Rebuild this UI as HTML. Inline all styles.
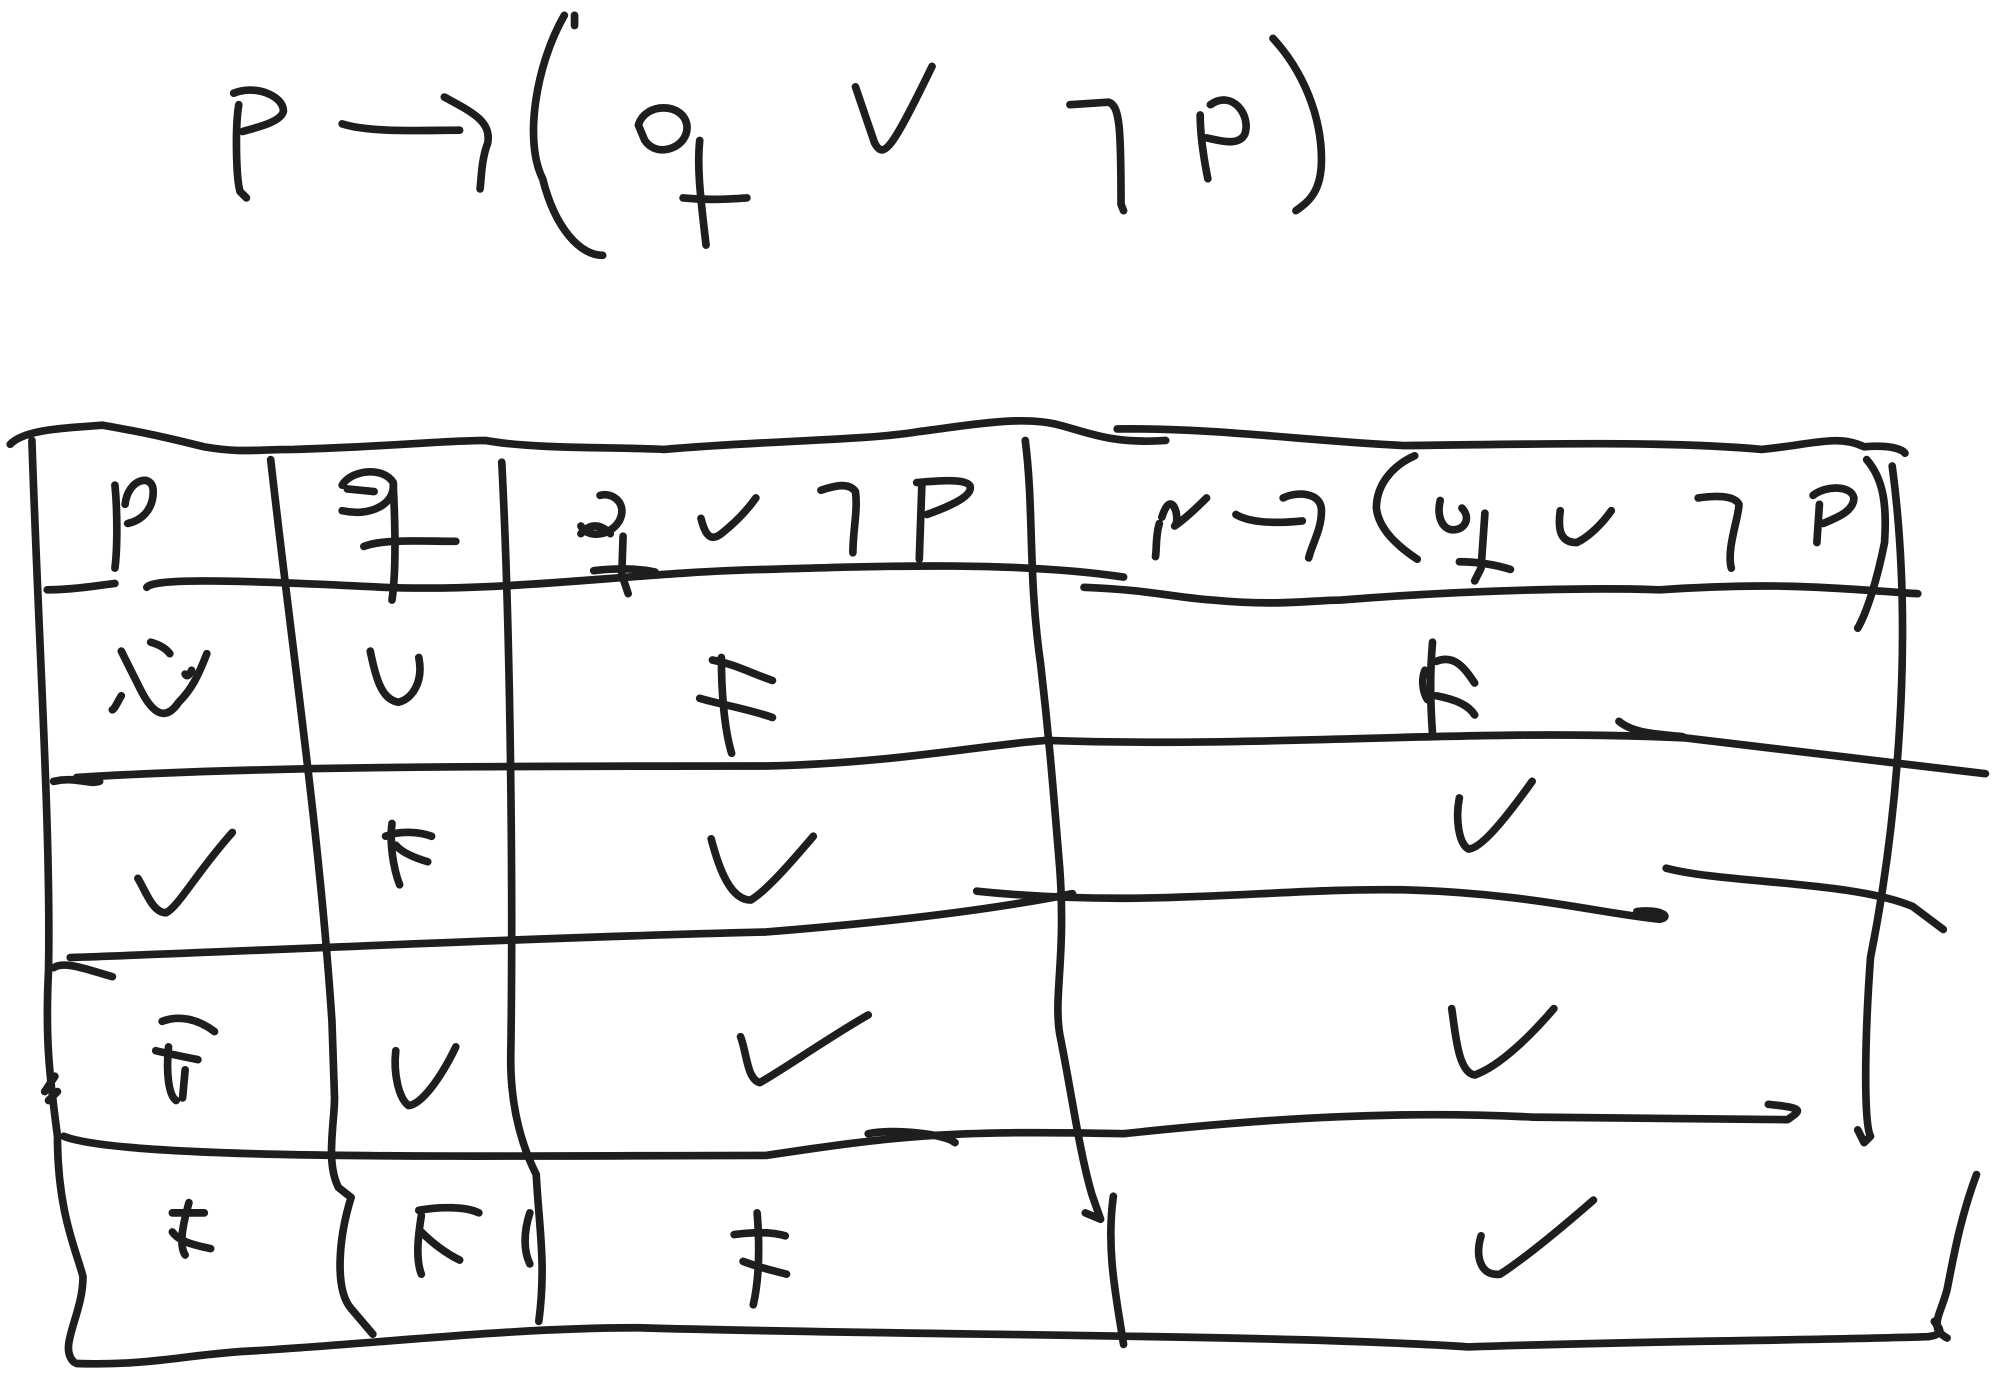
<!DOCTYPE html>
<html><head><meta charset="utf-8"><style>
html,body{margin:0;padding:0;background:#fff;width:2002px;height:1375px;overflow:hidden}
svg{display:block}
path{fill:none;stroke:#1e1e1e;stroke-width:6;stroke-linecap:round;stroke-linejoin:round}
</style></head><body>
<svg width="2002" height="1375" viewBox="0 0 1568 1077" preserveAspectRatio="none">
<path d="M187,82 C184,100 185,140 188,150 L193,155"/>
<path d="M183,73 C200,66 222,75 222,87 C220,96 200,100 190,103"/>
<path d="M268,97 C290,104 330,102 360,102"/>
<path d="M348,76 C370,88 385,95 382,112 C377,125 377,140 376,148"/>
<path d="M442,12 C420,50 410,110 425,140 C435,180 455,200 472,200"/>
<path d="M450,12 L450,20"/>
<path d="M500,98 C505,80 535,80 538,98 C540,115 515,125 505,110 Z"/>
<path d="M548,110 C546,130 548,150 553,192"/>
<path d="M535,155 C555,157 570,156 585,155"/>
<path d="M670,68 L685,112 C692,125 698,118 730,52"/>
<path d="M838,82 L868,80 C877,82 878,100 878,160 L880,165"/>
<path d="M940,90 C940,110 944,130 946,140"/>
<path d="M948,82 C965,70 980,90 975,105 C970,115 955,110 945,108"/>
<path d="M997,30 C1020,55 1035,90 1035,125 C1035,150 1025,158 1015,165"/>
<path d="M8,348 C20,335 60,335 80,333 C120,340 140,345 160,350 C190,355 200,352 230,352 C300,350 350,345 380,345 C420,352 480,350 520,352 C600,345 680,345 720,338 C760,333 800,325 830,333 C850,338 870,348 913,345"/>
<path d="M875,336 C950,335 1020,345 1100,349 C1200,348 1300,345 1380,352 C1420,348 1440,340 1460,350 C1480,348 1490,352 1492,355"/>
<path d="M25,345 C30,500 40,650 38,760 C35,820 40,850 45,890 C45,950 60,980 65,1000 C65,1030 45,1055 58,1067"/>
<path d="M35,855 L43,843 M38,862 L45,855"/>
<path d="M60,1068 C120,1070 150,1060 200,1058 C300,1052 400,1040 500,1040 C700,1046 1000,1045 1150,1055 C1300,1050 1420,1050 1510,1047 C1525,1045 1518,1040 1515,1035"/>
<path d="M1462,360 C1475,375 1478,395 1476,425 C1470,455 1462,480 1455,492"/>
<path d="M1482,365 C1500,500 1485,650 1465,750 C1460,820 1460,880 1465,890 L1460,895 L1455,885"/>
<path d="M1548,920 C1535,955 1530,985 1525,1010 C1520,1030 1510,1040 1525,1048"/>
<path d="M212,360 C230,520 250,650 260,800 L262,860 C262,880 255,910 265,930 L275,938 C265,970 262,1010 275,1025 L292,1045"/>
<path d="M393,362 C400,500 402,700 400,830 C400,870 410,900 420,920 C422,960 428,990 422,1035"/>
<path d="M415,990 C410,980 410,965 415,950"/>
<path d="M803,345 C810,400 805,450 815,520 C822,580 825,620 830,680 C835,750 825,780 830,810 C840,860 845,900 855,935 L862,955 L850,950"/>
<path d="M872,937 C866,980 875,1020 880,1053"/>
<path d="M37,462 C60,462 80,458 90,457"/>
<path d="M115,460 C120,452 200,455 300,460 C400,464 500,448 600,446 C700,443 800,440 880,452"/>
<path d="M849,460 C900,462 920,468 950,470 C1000,475 1030,470 1050,470 C1150,462 1250,460 1300,462 C1400,455 1450,462 1502,465"/>
<path d="M42,612 C60,608 70,615 78,612 M60,609 C200,600 400,600 600,600 C700,598 780,582 820,580 C1000,586 1150,570 1320,578 L1555,606"/>
<path d="M1268,565 C1280,575 1300,575 1318,577"/>
<path d="M42,758 C50,752 70,760 88,765 M55,750 C200,745 400,735 600,730 C700,722 780,712 840,700"/>
<path d="M765,698 C900,712 1000,695 1100,697 C1200,700 1250,715 1300,720 C1310,718 1300,712 1282,714"/>
<path d="M1305,680 C1350,692 1450,690 1498,710 L1522,728"/>
<path d="M50,890 C100,910 400,905 600,905 C700,890 740,885 880,888 C1000,875 1100,870 1200,875 L1400,877 C1410,870 1415,868 1385,865"/>
<path d="M680,888 C700,884 740,888 748,895"/>
<path d="M90,380 C92,400 92,430 90,445"/><path d="M98,395 C100,375 120,370 120,385 C120,400 110,408 100,410"/>
<path d="M268,380 C275,368 300,365 308,378 C310,395 290,405 268,400 M272,383 L293,385"/>
<path d="M308,380 C310,420 310,450 307,470"/><path d="M285,428 C300,422 330,424 357,424"/>
<path d="M455,418 C462,410 470,410 478,418 M470,388 C480,385 492,395 485,408 C478,420 460,422 455,412"/>
<path d="M488,420 L487,450 L492,465"/><path d="M465,447 C480,445 500,445 513,448"/>
<path d="M549,406 C552,418 556,425 565,418 C575,410 585,400 592,390"/>
<path d="M643,384 C655,380 665,378 670,385 C672,400 668,415 668,433"/>
<path d="M722,380 L720,438"/><path d="M718,378 C740,376 760,375 760,382 C760,390 740,398 726,403"/>
<path d="M908,410 C905,420 906,430 905,436 M910,405 C918,380 925,408 920,412 C930,405 940,395 945,390"/>
<path d="M968,403 C980,410 1000,410 1020,408 M1005,390 C1015,385 1035,385 1035,400 C1035,415 1028,425 1025,437"/>
<path d="M1108,357 C1090,365 1078,380 1078,398 C1080,415 1095,428 1110,438"/>
<path d="M1128,392 C1125,405 1130,415 1138,415 C1148,415 1152,405 1145,398 M1163,402 L1160,445 L1155,455 M1143,440 C1155,440 1170,442 1183,446"/>
<path d="M1222,400 C1220,415 1222,425 1235,425 C1245,420 1255,410 1262,400"/>
<path d="M1330,390 C1345,388 1358,388 1362,395 C1362,405 1352,430 1356,445"/>
<path d="M1425,395 L1423,425 M1420,388 C1430,380 1450,380 1452,390 C1452,400 1440,405 1428,410"/>
<path d="M118,503 C125,505 130,508 133,512 M95,510 C100,520 105,530 110,540 C120,560 130,565 140,550 C150,540 155,530 162,512 M150,525 C148,530 146,530 145,528 M95,545 C92,550 90,555 88,556"/>
<path d="M290,510 C295,535 300,548 312,550 C322,548 332,535 328,515"/>
<path d="M565,515 C565,540 567,570 573,590 M558,517 C575,520 590,528 605,533 M548,547 C565,552 585,555 605,562"/>
<path d="M1122,503 C1120,525 1120,548 1122,575 M1116,525 C1112,535 1116,545 1118,548 M1125,518 C1140,512 1148,525 1155,535 M1125,545 C1140,548 1150,552 1155,560"/>
<path d="M108,688 C115,700 120,715 130,715 C140,710 155,682 182,652"/>
<path d="M307,645 C305,660 308,680 313,693 M302,655 C315,650 330,652 338,655 M310,662 C315,668 325,672 335,675"/>
<path d="M557,657 C563,680 572,705 588,705 C600,698 620,675 637,655"/>
<path d="M1143,625 C1140,640 1142,660 1150,665 C1160,665 1180,640 1200,612"/>
<path d="M127,800 C140,795 155,798 168,808 M122,823 C130,825 140,827 155,830 M132,820 C130,840 132,858 138,862 M145,838 L143,860"/>
<path d="M310,823 C308,840 312,860 320,866 C330,865 345,845 357,820"/>
<path d="M580,812 C585,825 585,845 595,848 C610,840 650,812 680,795"/>
<path d="M1137,790 C1140,810 1142,840 1155,842 C1175,835 1200,810 1217,790"/>
<path d="M148,942 C143,960 140,975 145,983 M135,950 L160,950 M135,965 C140,972 150,975 165,978"/>
<path d="M330,952 C328,965 325,985 330,998 M328,948 C345,945 365,945 375,950 M330,965 C340,975 350,982 360,987"/>
<path d="M593,950 C595,975 595,1000 590,1022 M575,967 C590,965 605,965 615,968 M582,988 C595,993 605,995 616,998"/>
<path d="M1160,968 C1155,985 1160,1000 1175,998 C1195,985 1225,960 1248,940"/>
</svg>
</body></html>
